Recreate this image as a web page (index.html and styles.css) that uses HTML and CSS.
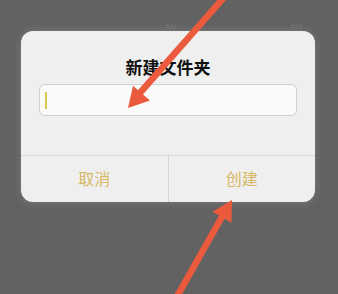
FILE: index.html
```html
<!DOCTYPE html>
<html>
<head>
  <title>新建文件夹</title>
  <link rel="stylesheet" href="styles.css">
</head>
<body>
  <div class="backdrop">
    <span class="ghost ghost-a">AM</span>
    <span class="ghost ghost-b">AM</span>
  </div>

  <div class="dialog">
    <h2 class="dialog-title">新建文件夹</h2>
    <div class="dialog-input"><span class="caret"></span></div>
    <div class="dialog-actions">
      <button class="action">取消</button>
      <button class="action">创建</button>
    </div>
  </div>

  <svg class="arrows" width="338" height="294" viewBox="0 0 338 294">
    <line x1="227" y1="-6" x2="139" y2="94" stroke="#ec5a3e" stroke-width="6.5"/>
    <polygon points="128,108 133,85.8 150,100.4" fill="#ec5a3e"/>
    <line x1="175" y1="300" x2="223" y2="215" stroke="#ec5a3e" stroke-width="6.5"/>
    <polygon points="232,200 231.5,222.8 212.5,211.8" fill="#ec5a3e"/>
  </svg>
</body>
</html>
```

FILE: styles.css
```css
body {
  margin: 0;
  width: 338px;
  height: 294px;
  background: #626262;
  font-family: "Noto Sans CJK SC", sans-serif;
  position: relative;
  overflow: hidden;
}

.backdrop {
  position: absolute;
  top: 0;
  left: 0;
  right: 0;
  height: 31px;
}

.ghost {
  position: absolute;
  top: 22px;
  font-family: "Liberation Sans", sans-serif;
  font-size: 8px;
  color: #747474;
}

.ghost-a {
  left: 165px;
}

.ghost-b {
  left: 290px;
}

.dialog {
  position: relative;
  margin: 31px 0 0 21px;
  width: 294px;
  height: 171px;
  background: #efefef;
  border-radius: 12px;
  box-shadow: 0 0 8px rgba(150, 150, 150, 0.5);
  display: flex;
  flex-direction: column;
  box-sizing: border-box;
  padding-top: 24px;
}

.dialog-title {
  margin: 0;
  font-size: 17px;
  line-height: 24px;
  font-weight: 700;
  color: #111;
  text-align: center;
}

.dialog-input {
  margin: 5px 18px 0 18px;
  height: 32px;
  box-sizing: border-box;
  border: 1px solid #d0d0d0;
  border-radius: 6px;
  background: #fafafa;
  display: flex;
  align-items: center;
  padding-left: 5px;
}

.caret {
  width: 2px;
  height: 17px;
  background: #dcc64e;
}

.dialog-actions {
  margin-top: auto;
  height: 46px;
  border-top: 1px solid #d6d6d6;
  display: flex;
}

.action {
  flex: 1;
  border: 0;
  background: none;
  font-family: "Noto Sans CJK SC", sans-serif;
  font-size: 16px;
  color: #d9b866;
  padding: 0 0 2px 0;
}

.action + .action {
  border-left: 1px solid #d6d6d6;
}

.arrows {
  position: absolute;
  top: 0;
  left: 0;
}
```
